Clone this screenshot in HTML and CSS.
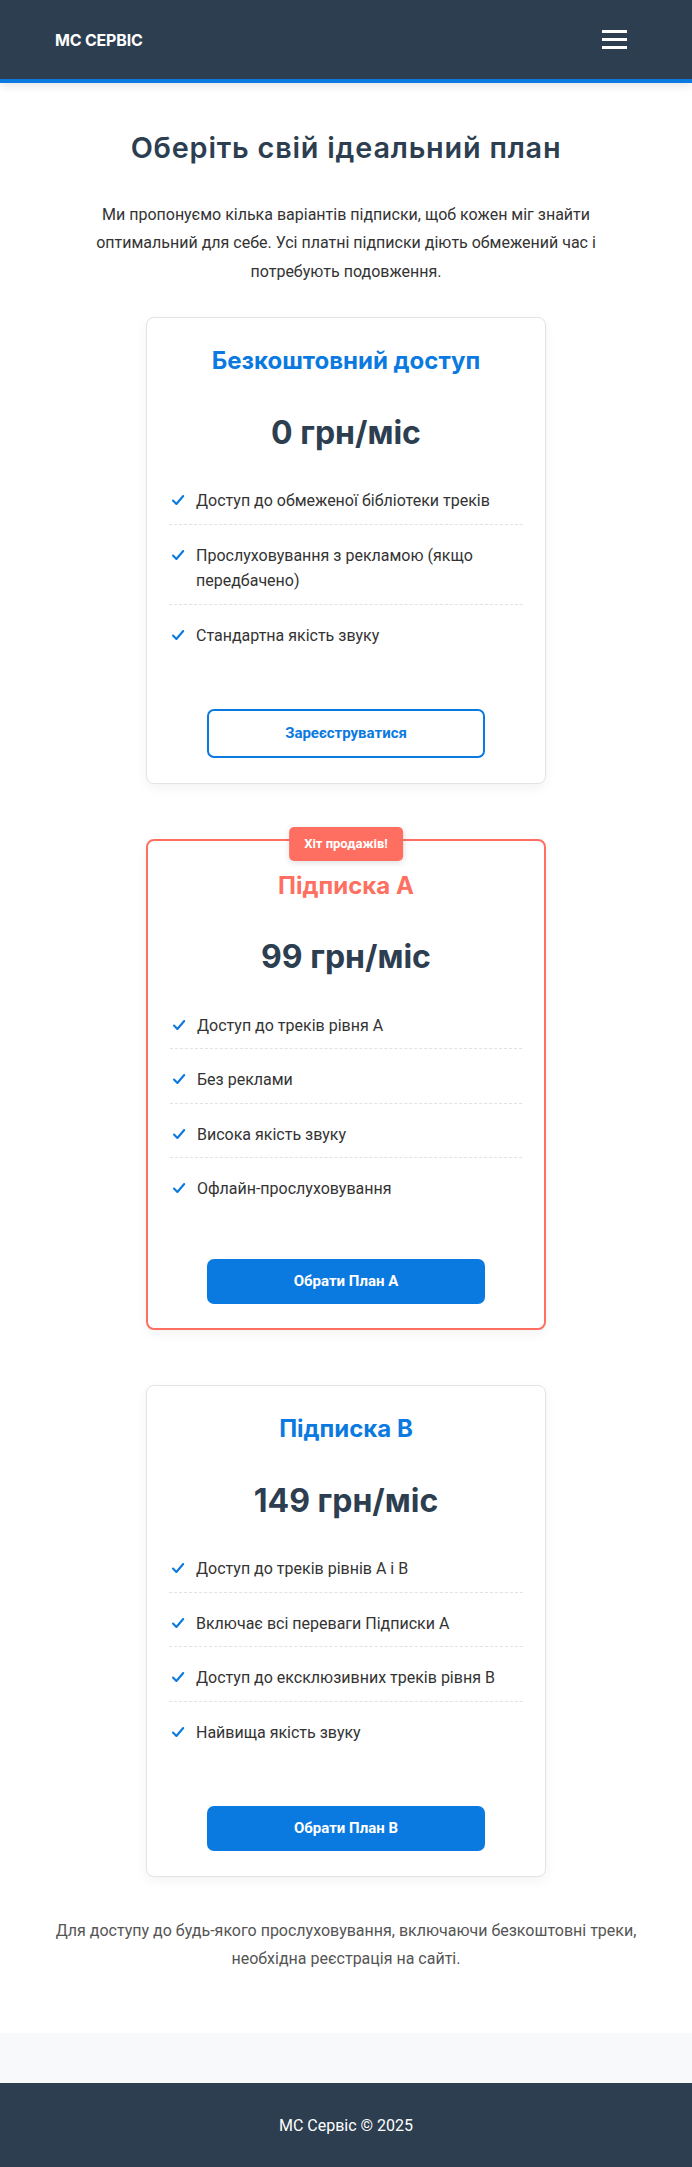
FILE: index.html
```html
<!DOCTYPE html>
<html lang="uk">
<head>
<meta charset="utf-8">
<title>МС Сервіс — Плани</title>
<link rel="stylesheet" href="styles.css">
</head>
<body>
<header class="site-header">
  <div class="logo">МС СЕРВІС</div>
  <button class="menu-toggle" aria-label="Меню"><span></span><span></span><span></span></button>
</header>

<main class="pricing">
  <h1 class="pricing-title">Оберіть свій ідеальний план</h1>
  <p class="pricing-intro">Ми пропонуємо кілька варіантів підписки, щоб кожен міг знайти оптимальний для себе. Усі платні підписки діють обмежений час і потребують подовження.</p>

  <div class="plans">
    <div class="plan">
      <h3 class="plan-name">Безкоштовний доступ</h3>
      <div class="plan-price">0 грн/міс</div>
      <ul class="plan-features">
        <li><svg class="check" viewBox="0 0 12 10" aria-hidden="true"><path d="M1 5.6 L4.4 9 L11.2 1"/></svg>Доступ до обмеженої бібліотеки треків</li>
        <li><svg class="check" viewBox="0 0 12 10" aria-hidden="true"><path d="M1 5.6 L4.4 9 L11.2 1"/></svg>Прослуховування з рекламою (якщо передбачено)</li>
        <li><svg class="check" viewBox="0 0 12 10" aria-hidden="true"><path d="M1 5.6 L4.4 9 L11.2 1"/></svg>Стандартна якість звуку</li>
      </ul>
      <a class="btn btn-outline" href="#">Зареєструватися</a>
    </div>

    <div class="plan plan-popular">
      <span class="plan-badge">Хіт продажів!</span>
      <h3 class="plan-name">Підписка А</h3>
      <div class="plan-price">99 грн/міс</div>
      <ul class="plan-features">
        <li><svg class="check" viewBox="0 0 12 10" aria-hidden="true"><path d="M1 5.6 L4.4 9 L11.2 1"/></svg>Доступ до треків рівня А</li>
        <li><svg class="check" viewBox="0 0 12 10" aria-hidden="true"><path d="M1 5.6 L4.4 9 L11.2 1"/></svg>Без реклами</li>
        <li><svg class="check" viewBox="0 0 12 10" aria-hidden="true"><path d="M1 5.6 L4.4 9 L11.2 1"/></svg>Висока якість звуку</li>
        <li><svg class="check" viewBox="0 0 12 10" aria-hidden="true"><path d="M1 5.6 L4.4 9 L11.2 1"/></svg>Офлайн-прослуховування</li>
      </ul>
      <a class="btn btn-primary" href="#">Обрати План А</a>
    </div>

    <div class="plan">
      <h3 class="plan-name">Підписка В</h3>
      <div class="plan-price">149 грн/міс</div>
      <ul class="plan-features">
        <li><svg class="check" viewBox="0 0 12 10" aria-hidden="true"><path d="M1 5.6 L4.4 9 L11.2 1"/></svg>Доступ до треків рівнів А і В</li>
        <li><svg class="check" viewBox="0 0 12 10" aria-hidden="true"><path d="M1 5.6 L4.4 9 L11.2 1"/></svg>Включає всі переваги Підписки А</li>
        <li><svg class="check" viewBox="0 0 12 10" aria-hidden="true"><path d="M1 5.6 L4.4 9 L11.2 1"/></svg>Доступ до ексклюзивних треків рівня В</li>
        <li><svg class="check" viewBox="0 0 12 10" aria-hidden="true"><path d="M1 5.6 L4.4 9 L11.2 1"/></svg>Найвища якість звуку</li>
      </ul>
      <a class="btn btn-primary" href="#">Обрати План В</a>
    </div>
  </div>

  <p class="pricing-note">Для доступу до будь-якого прослуховування, включаючи безкоштовні треки, необхідна реєстрація на сайті.</p>
</main>

<footer class="site-footer">МС Сервіс © 2025</footer>
</body>
</html>
```

FILE: styles.css
```css
* { box-sizing: border-box; }

html, body {
  margin: 0;
  padding: 0;
}

body {
  background: #f8f9fa;
  font-family: Roboto, "Liberation Sans", Arial, sans-serif;
  font-size: 16px;
  color: #333;
}

.site-header {
  height: 83px;
  background: #2c3e50;
  border-bottom: 4px solid #0a79e0;
  box-shadow: 0 2px 10px rgba(0, 0, 0, 0.12);
  display: flex;
  align-items: center;
  justify-content: space-between;
  padding: 0 55px;
  position: relative;
  z-index: 2;
}

.logo {
  font-family: Inter, "Noto Sans", sans-serif;
  font-weight: 700;
  font-size: 16px;
  color: #fff;
  letter-spacing: -0.2px;
}

.menu-toggle {
  background: none;
  border: 0;
  padding: 10px;
  display: flex;
  flex-direction: column;
  gap: 5px;
  cursor: pointer;
}

.menu-toggle span {
  display: block;
  width: 25px;
  height: 3px;
  background: #fff;
}

.pricing {
  background: #fff;
  padding: 48px 20px 59px;
  text-align: center;
}

.pricing-title {
  font-family: Inter, "Noto Sans", sans-serif;
  font-weight: 600;
  font-size: 28.8px;
  line-height: 1.2;
  letter-spacing: 0.8px;
  color: #2c3e50;
  margin: 0 0 35px;
}

.pricing-intro {
  max-width: 520px;
  margin: 0 auto 30px;
  line-height: 1.8;
  color: #333;
}

.plans {
  display: flex;
  flex-direction: column;
  align-items: center;
  gap: 55px;
}

.plan {
  position: relative;
  width: 400px;
  background: #fff;
  border: 1px solid #e3e3e3;
  border-radius: 8px;
  box-shadow: 0 4px 12px rgba(0, 0, 0, 0.05);
  padding: 29px 22px 25px;
  display: flex;
  flex-direction: column;
  align-items: center;
}

.plan-popular {
  border: 2px solid #ff6f61;
  padding-top: 31px;
  padding-bottom: 24px;
}

.plan-badge {
  position: absolute;
  top: -14px;
  left: 50%;
  transform: translateX(-50%);
  background: #ff6f61;
  color: #fff;
  font-weight: 700;
  font-size: 13px;
  line-height: 18px;
  padding: 8px 15px;
  border-radius: 5px;
  box-shadow: 0 2px 6px rgba(0, 0, 0, 0.12);
  white-space: nowrap;
}

.plan-name {
  font-family: Inter, "Noto Sans", sans-serif;
  font-weight: 700;
  font-size: 24px;
  line-height: 1.2;
  color: #0a79e0;
  margin: 0;
}

.plan-popular .plan-name { color: #ff6f61; }

.plan-price {
  font-family: Inter, "Noto Sans", sans-serif;
  font-weight: 700;
  font-size: 32px;
  line-height: 1.2;
  color: #2c3e50;
  margin: 38px 0 26px;
}

.plan-features {
  list-style: none;
  margin: 0 0 50px;
  padding: 0;
  width: 100%;
  text-align: left;
}

.plan-popular .plan-features { margin-bottom: 47px; }

.plan-features li {
  position: relative;
  padding: 10px 0 10px 27px;
  margin-bottom: 8px;
  line-height: 1.6;
  border-bottom: 1px dashed #e2e2e2;
}

.plan-features li:last-child {
  border-bottom: none;
  margin-bottom: 0;
}

.check {
  position: absolute;
  left: 3px;
  top: 17px;
  width: 12px;
  height: 10px;
  overflow: visible;
}

.check path {
  fill: none;
  stroke: #0a79e0;
  stroke-width: 2.1;
  stroke-linecap: round;
  stroke-linejoin: round;
}

.btn {
  display: block;
  width: 278px;
  padding: 12px 0;
  border-radius: 7px;
  font-weight: 700;
  font-size: 15px;
  line-height: 21px;
  text-align: center;
  text-decoration: none;
}

.btn-primary {
  background: #0a79e0;
  color: #fff;
}

.btn-outline {
  border: 2px solid #0a79e0;
  color: #0a79e0;
  background: #fff;
}

.pricing-note {
  max-width: 640px;
  margin: 40px auto 0;
  line-height: 1.8;
  color: #555;
}

.site-footer {
  margin-top: 50px;
  background: #2c3e50;
  color: #fff;
  text-align: center;
  padding: 30px 20px;
  line-height: 1.6;
}
```
